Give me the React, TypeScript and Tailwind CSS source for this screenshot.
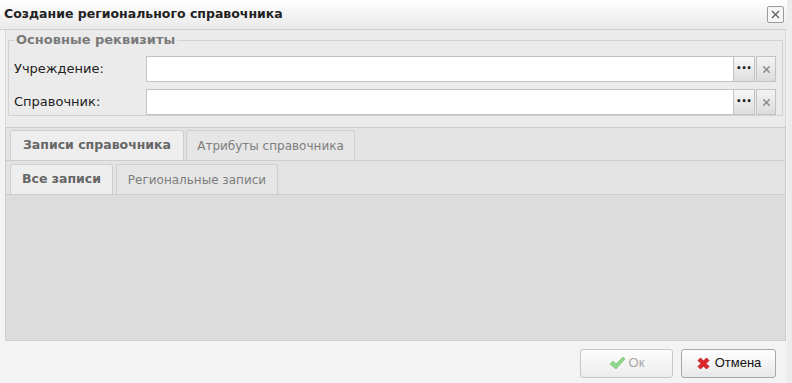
import { X } from "lucide-react";

const font = "font-['Tahoma','DejaVu_Sans','Liberation_Sans',sans-serif]";

function PickerRow({ label }: { label: string }) {
    return (
        <div className="flex items-center h-[26px]">
            <div className="w-[137px] pl-[5px] text-[13px] text-[#222]">{label}</div>
            <div className="flex-1 h-[26px] bg-white border border-[#c3c3c3]" />
            <div className="w-[21px] h-[26px] flex items-center justify-center border border-l-0 border-[#c3c3c3] bg-gradient-to-b from-[#f7f7f7] to-[#dedede] text-[8px] font-bold leading-none text-[#222] tracking-[0px] pb-[1px]">
                •••
            </div>
            <div className="w-[20px] h-[26px] ml-[1px] flex items-center justify-center border border-[#c3c3c3] bg-gradient-to-b from-[#f3f3f3] to-[#dcdcdc]">
                <X size={11} strokeWidth={3.2} className="text-[#8a8a8a]" />
            </div>
        </div>
    );
}

function Tab({ label, active, w }: { label: string; active?: boolean; w: string }) {
    return (
        <div
            className={`${w} h-[30px] flex items-center justify-center border border-b-0 border-[#cfcfcf] rounded-t-[3px] ${
                active ? "bg-[#eeeeee] font-bold text-[#666] text-[12.5px]" : "bg-[#e6e6e6] text-[#7d7d7d] text-[12px]"
            }`}
        >
            {label}
        </div>
    );
}

export default function App() {
    return (
        <div className={`${font} w-[792px] h-[383px] bg-[#f3f3f3] flex flex-col border-r-[5px] border-[#ececec] overflow-hidden`}>
            {/* title */}
            <div className="h-[30px] flex items-center justify-between pl-[4px] pr-[3px] bg-gradient-to-b from-[#ffffff] to-[#e9e9e9] border-b border-[#d0d0d0]">
                <span className="text-[12.5px] font-bold text-[#222]">Создание регионального справочника</span>
                <div className="w-[17px] h-[17px] flex items-center justify-center border border-[#9a9a9a] rounded-[2px] bg-[#f6f6f6]">
                    <X size={13} strokeWidth={2} className="text-[#555]" />
                </div>
            </div>

            <div className="flex-1 flex flex-col pl-[5px] pr-[1px]">
                {/* fieldset */}
                <div className="bg-[#ebebeb] border-x border-[#d6d6d6] pt-[2px] pb-[11px] px-[2px]">
                    <fieldset className="border border-[#d2d2d2] pl-[0px] pr-[6px] pb-[0px] pt-[8px]">
                        <legend className="ml-[5px] px-[2px] text-[13px] font-bold text-[#7a7a7a] leading-[16px]">Основные реквизиты</legend>
                        <div className="flex flex-col gap-[7px]">
                            <PickerRow label="Учреждение:" />
                            <PickerRow label="Справочник:" />
                        </div>
                    </fieldset>
                </div>

                {/* tabs */}
                <div className="flex-1 flex flex-col border-x border-t border-[#cdcdcd] bg-[#e2e2e2]">
                    <div className="flex gap-[2px] pl-[4px] pt-[2px] border-b border-[#cdcdcd] bg-[#e3e3e3]">
                        <Tab label="Записи справочника" active w="w-[174px]" />
                        <Tab label="Атрибуты справочника" w="w-[169px]" />
                    </div>
                    <div className="flex gap-[3px] pl-[4px] pt-[3px] border-b border-[#cdcdcd] bg-[#e3e3e3]">
                        <Tab label="Все записи" active w="w-[103px]" />
                        <Tab label="Региональные записи" w="w-[162px]" />
                    </div>
                    <div className="flex-1 bg-[#dcdcdc]" />
                </div>

                {/* footer */}
                <div className="h-[43px] flex items-center justify-end gap-[8px] pr-[10px] pt-[2px] border-t border-[#cfcfcf] bg-[#f3f3f3]">
                    <button className="w-[93px] h-[29px] flex items-center justify-center gap-[3px] border border-[#c7c7c7] rounded-[3px] bg-gradient-to-b from-[#fdfdfd] to-[#ececec] text-[13px] text-[#a8a8a8] font-['Liberation_Sans',sans-serif]">
                        <svg width="17" height="14" viewBox="0 0 17 14">
                            <path d="M1 8 L4 5 L7 8 L14 1 L16 3 L7 13 Z" fill="#8fd68f" stroke="#7cc57c" strokeWidth="0.8" strokeLinejoin="round" />
                        </svg>
                        Ок
                    </button>
                    <button className="w-[95px] h-[29px] flex items-center justify-center gap-[4px] border border-[#a8a8a8] rounded-[3px] bg-gradient-to-b from-[#ffffff] to-[#e8e8e8] text-[13px] text-[#111] font-['Liberation_Sans',sans-serif]">
                        <svg width="15" height="15" viewBox="0 0 15 15">
                            <path d="M2 4.5 L4.5 2 L7.5 5 L10.5 2 L13 4.5 L10 7.5 L13 10.5 L10.5 13 L7.5 10 L4.5 13 L2 10.5 L5 7.5 Z" fill="#e0262c" stroke="#b01418" strokeWidth="0.8" strokeLinejoin="round" />
                        </svg>
                        Отмена
                    </button>
                </div>
            </div>
        </div>
    );
}
